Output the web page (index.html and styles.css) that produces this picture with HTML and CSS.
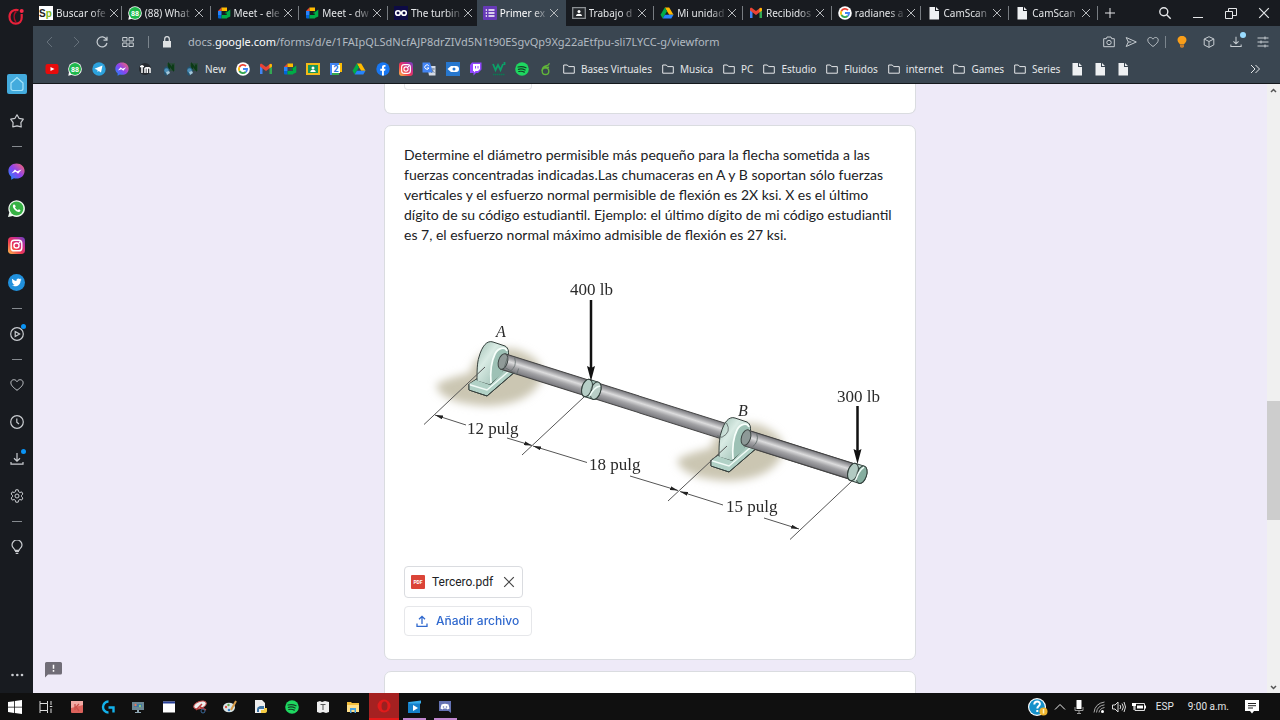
FILE: index.html
```
<!DOCTYPE html>
<html lang="es">
<head>
<meta charset="utf-8">
<title>Primer examen</title>
<link rel="stylesheet" href="styles.css">
</head>
<body>
<svg class="sprite" aria-hidden="true">
  <symbol id="x" viewBox="0 0 10 10"><path d="M1 1l8 8M9 1L1 9" fill="none" stroke="currentColor"/></symbol>
  <symbol id="folder" viewBox="0 0 12 12"><path d="M.7 2h3.6l1.4 1.6h5.6v6.6H.7z" fill="none" stroke="currentColor"/></symbol>
  <symbol id="page" viewBox="0 0 14 14"><path d="M2.500 1h5.500v4h4v8.500h-9.500zM9 1l3 3H9z" fill="#eef0f2"/></symbol>
  <symbol id="wa88" viewBox="0 0 14 14"><circle cx="7" cy="7" r="6.800" fill="#fff"/><path d="M.3 13.800l.8-4 3 3z" fill="#fff"/><circle cx="7" cy="7" r="6" fill="#1fb84c"/><text x="7" y="9.600" text-anchor="middle" class="badge-num">88</text></symbol>
  <symbol id="meet" viewBox="0 0 14 14"><path d="M1 5l3.500-3.500V5z" fill="#ea4335"/><path d="M1 5h3.500v4H1z" fill="#2684fc"/><path d="M1 9h3.500v3.500H2A1 1 0 0 1 1 11.500z" fill="#0066da"/><path d="M4.500 1.500H10V5H4.500z" fill="#ffba00"/><path d="M4.500 9H10v3.500H4.500z" fill="#00ac47"/><path d="M10 2v10l3.300-1.600V3.600L10 6z" fill="#00ac47"/><path d="M10 5v4L8 7z" fill="#00832d"/></symbol>
  <symbol id="drive" viewBox="0 0 14 14"><path d="M4.800 1.500h4.400l4.300 7.300H9.200z" fill="#ffba00"/><path d="M4.800 1.500L7 5.200 2.700 12.500.5 8.800z" fill="#00ac47"/><path d="M4.900 8.800h8.600l-2.200 3.700H2.700z" fill="#2684fc"/></symbol>
  <symbol id="gmail" viewBox="0 0 14 14"><path d="M1 3.500h2.500V12H1z" fill="#4285f4"/><path d="M10.500 3.500H13V12h-2.500z" fill="#34a853"/><path d="M1 3c0-1.300 1.400-1.500 2.300-.8L7 5l3.700-2.800C11.600 1.500 13 1.700 13 3v1.400L7 9 1 4.400z" fill="#ea4335"/><path d="M10.500 2.400c1-.8 2.500-.5 2.500.8v1.300l-2.500 1.800z" fill="#fbbc04"/></symbol>
  <symbol id="google" viewBox="0 0 14 14"><circle cx="7" cy="7" r="6.800" fill="#fff"/><g fill="none" stroke-width="1.800"><path d="M3.400 5A4.100 4.100 0 0 1 10 4.200" stroke="#ea4335"/><path d="M3.400 9a4.100 4.100 0 0 1 0-4" stroke="#fbbc05"/><path d="M3.400 9A4.100 4.100 0 0 0 9.700 10" stroke="#34a853"/><path d="M7 7h4.100A4.100 4.100 0 0 1 9.700 10" stroke="#4285f4"/></g></symbol>
  <symbol id="messenger" viewBox="0 0 16 16"><path d="M8 .5C3.500.5.4 3.600.4 7.600c0 2.300 1 4 2.600 5.300v2.800l2.600-1.300c.8.200 1.500.3 2.400.3 4.500 0 7.600-3 7.600-7.100S12.500.5 8 .5z" fill="url(#msg)"/><path d="M3.300 9.800L6.500 6l2.100 1.700L12.700 6 9.500 10 7.300 8.200z" fill="#fff"/></symbol>
  <symbol id="insta" viewBox="0 0 16 16"><rect width="16" height="16" rx="3.500" fill="url(#ig)"/><g fill="none" stroke="#fff" stroke-width="1.300"><rect x="3" y="3" width="10" height="10" rx="3"/><circle cx="8" cy="8" r="2.400"/></g><circle cx="10.900" cy="5.100" r=".8" fill="#fff"/></symbol>
  <symbol id="spotify" viewBox="0 0 14 14"><circle cx="7" cy="7" r="6.800" fill="#1ed760"/><path d="M3 5c2.800-.8 5.500-.5 8 .8M3.400 7.300c2.300-.6 4.600-.4 6.700.7M3.800 9.500c2-.5 3.800-.3 5.500.6" fill="none" stroke="#143f25" stroke-width="1.200" stroke-linecap="round"/></symbol>
  <symbol id="idm" viewBox="0 0 14 14"><path d="M5 1h8v8H5z" fill="#2b4a3b"/><path d="M7 7.500v-5l4 5v-5" fill="none" stroke="#0a3a15" stroke-width="1.800"/><path d="M2 6l3-2 3 4-1 4-3 2-2-2z" fill="#25536f"/><circle cx="4.500" cy="8.500" r="2.200" fill="#4d8fb8"/><path d="M4 10l3-1 1 2-3 2z" fill="#a6c9dc"/></symbol>
  <symbol id="heart" viewBox="0 0 14 14"><path d="M7 12.300C3 9.300.9 7.200.9 4.700c0-3.300 4.400-4.200 6.100-1 1.700-3.200 6.100-2.300 6.100 1 0 2.500-2.100 4.600-6.100 7.600z" fill="none" stroke="currentColor"/></symbol>
  <symbol id="down" viewBox="0 0 14 14"><path d="M7 1v8M4 6.300L7 9.200l3-2.900M1 10v2.200h12V10" fill="none" stroke="currentColor" stroke-width="1.200"/></symbol>
  <defs>
    <linearGradient id="msg" x1="0" y1="1" x2="1" y2="0"><stop offset="0" stop-color="#128bff"/><stop offset=".5" stop-color="#8d42ee"/><stop offset="1" stop-color="#ff6a66"/></linearGradient>
    <linearGradient id="ig" x1="0" y1="1" x2="1" y2="0"><stop offset="0" stop-color="#fdc04b"/><stop offset=".4" stop-color="#ef3a50"/><stop offset=".7" stop-color="#c42c92"/><stop offset="1" stop-color="#6048c8"/></linearGradient>
  </defs>
</svg>

<div class="screen">
  <nav class="sidebar" aria-label="Barra lateral">
    <button class="logo" aria-label="Menú de Opera"><svg viewBox="0 0 17 17"><path d="M10.500 2.200C5.500.8 1.500 4 1.500 8.800c0 4.200 2.700 6.900 6.200 6.900 3.800 0 6-2.600 6-6.200V6" fill="none" stroke="#e8213a" stroke-width="2.200"/><path d="M8.500 3.500C5.500 5 5.300 11 8 14" fill="none" stroke="#a60c25" stroke-width="1.400"/><circle cx="13.700" cy="3" r="2" fill="#fa2a49"/></svg></button>
    <button class="slot" aria-label="Inicio"><svg class="s20" viewBox="0 0 20 20"><rect width="20" height="20" rx="2" fill="#43abdd"/><path d="M4 9l6-5.500L16 9v5.500a2 2 0 0 1-2 2H6a2 2 0 0 1-2-2z" fill="none" stroke="#a5e3fa" stroke-width="1.200"/></svg></button>
    <button class="slot" aria-label="Marcadores"><svg class="s14" viewBox="0 0 14 14"><path d="M7 .8l2 3.500 4.300.9-2.400 3.400.3 4.300L7 11.800l-4.200 1.100.3-4.300L.7 5.200 5 4.300z" fill="none" stroke="currentColor" stroke-linejoin="round" stroke-width="1.200"/></svg></button>
    <hr>
    <button class="slot" aria-label="Messenger"><svg class="s17"><use href="#messenger"/></svg></button>
    <button class="slot" aria-label="WhatsApp"><svg class="s17" viewBox="0 0 16 16"><path d="M0 16l1.200-4.300A7.800 7.800 0 1 1 4.500 15z" fill="#eef8ef"/><circle cx="8" cy="8" r="6.500" fill="#36b144"/><path d="M5.300 4.300c-1.500 1.200-.4 3.400 1.200 5 1.700 1.600 3.900 2.700 5.200 1.100.5-.8-.8-1.500-1.500-1.800l-.9 1C8 9 7 8 6.500 6.900l.8-.9c-.3-.9-.9-2.300-2-1.700z" fill="#fff"/></svg></button>
    <button class="slot" aria-label="Instagram"><svg class="s17"><use href="#insta"/></svg></button>
    <button class="slot" aria-label="Twitter"><svg class="s17" viewBox="0 0 16 16"><circle cx="8" cy="8" r="8" fill="#2090dc"/><path d="M12.800 5.400l-1 .9c.1 3.800-3.900 6.700-8.300 4.600 1.100 0 2-.2 2.700-.8-1-.1-1.500-.7-1.800-1.300h.8c-1-.4-1.500-1.100-1.500-2l.8.200C3.700 6.300 3.500 5.300 4 4.500c1 1.200 2.300 1.900 4 2C7.500 4.400 9.800 3.400 11.100 4.700l1.300-.4-.7.900z" fill="#fff"/></svg></button>
    <hr>
    <button class="slot dot" aria-label="Reproductor"><svg class="s14" viewBox="0 0 14 14"><g fill="none" stroke="currentColor" stroke-width="1.200"><circle cx="7" cy="7" r="6.300"/><path d="M5.200 4.500L9.600 7 5.200 9.500z"/></g></svg></button>
    <hr>
    <button class="slot" aria-label="Favoritos"><svg class="s14"><use href="#heart"/></svg></button>
    <button class="slot" aria-label="Historial"><svg class="s14" viewBox="0 0 14 14"><g fill="none" stroke="currentColor" stroke-width="1.200"><circle cx="7" cy="7" r="6.300"/><path d="M6.800 3.500v3.700L9 9"/></g></svg></button>
    <button class="slot dot" aria-label="Descargas"><svg class="s14"><use href="#down"/></svg></button>
    <button class="slot" aria-label="Configuración"><svg class="s14" viewBox="0 0 14 14"><g fill="none" stroke="currentColor"><path d="M5.800.8h2.400l.4 1.900 1.300.8 1.800-.6 1.200 2.100L11.500 6.300v1.400l1.400 1.300-1.200 2.100-1.800-.6-1.300.8-.4 1.900H5.800l-.4-1.900-1.300-.8-1.800.6L1.100 9l1.400-1.300V6.300L1.100 5l1.200-2.100 1.800.6 1.300-.8z"/><circle cx="7" cy="7" r="2"/></g></svg></button>
    <hr>
    <button class="slot" aria-label="Consejos"><svg class="s14" viewBox="0 0 14 14"><path d="M5 10.300C4.800 8.800 2 8 2 5a5 5 0 0 1 10 0c0 3-2.800 3.800-3 5.300z" fill="none" stroke="currentColor" stroke-width="1.200"/><path d="M5 11.500h4M5.700 13.300h2.600" stroke="currentColor" stroke-width="1.200"/></svg></button>
    <button class="slot more" aria-label="Más"><svg class="s14" viewBox="0 0 14 14"><g fill="currentColor"><circle cx="2.500" cy="7" r="1.300"/><circle cx="7.300" cy="7" r="1.300"/><circle cx="12" cy="7" r="1.300"/></g></svg></button>
  </nav>

  <div class="window">
    <header class="tabbar">
      <div class="tabs">
        <div class="tab"><svg class="s14" viewBox="0 0 14 14"><path d="M0 0h14v14H0z" fill="#fff"/><text x="0" y="11" class="sp">S<tspan fill="#83b817">p</tspan></text></svg><span>Buscar ofe</span><button aria-label="Cerrar"><svg><use href="#x"/></svg></button></div>
        <div class="tab"><svg class="s14"><use href="#wa88"/></svg><span>(88) What</span><button aria-label="Cerrar"><svg><use href="#x"/></svg></button></div>
        <div class="tab"><svg class="s14"><use href="#meet"/></svg><span>Meet - ele</span><button aria-label="Cerrar"><svg><use href="#x"/></svg></button></div>
        <div class="tab"><svg class="s14"><use href="#meet"/></svg><span>Meet - dw</span><button aria-label="Cerrar"><svg><use href="#x"/></svg></button></div>
        <div class="tab last"><svg class="s14" viewBox="0 0 14 14"><path d="M0 0h14v14H0z" fill="#0d0b45"/><g fill="none" stroke="#fff" stroke-width="1.600"><circle cx="4" cy="7" r="2.300"/><circle cx="10" cy="7" r="2.300"/></g></svg><span>The turbin</span><button aria-label="Cerrar"><svg><use href="#x"/></svg></button></div>
        <div class="tab active"><svg class="s14" viewBox="0 0 14 14"><rect width="14" height="14" rx="1" fill="#673ab7"/><path d="M5.500 4h6M5.500 7h6M5.500 10h6M2.700 4H4M2.700 7H4M2.700 10H4" stroke="#fff" stroke-width="1.300"/></svg><span>Primer ex</span><button aria-label="Cerrar"><svg><use href="#x"/></svg></button></div>
        <div class="tab"><svg class="s14" viewBox="0 0 14 14"><path d="M.7 1.700h12.600v10.600H.7z" fill="#25282c" stroke="#8c9094" stroke-width="1.300"/><circle cx="7" cy="5.500" r="1.500" fill="#fff"/><path d="M4 10c0-3 6-3 6 0z" fill="#fff"/></svg><span>Trabajo d</span><button aria-label="Cerrar"><svg><use href="#x"/></svg></button></div>
        <div class="tab"><svg class="s14"><use href="#drive"/></svg><span>Mi unidad</span><button aria-label="Cerrar"><svg><use href="#x"/></svg></button></div>
        <div class="tab"><svg class="s14"><use href="#gmail"/></svg><span>Recibidos</span><button aria-label="Cerrar"><svg><use href="#x"/></svg></button></div>
        <div class="tab"><svg class="s14"><use href="#google"/></svg><span>radianes a</span><button aria-label="Cerrar"><svg><use href="#x"/></svg></button></div>
        <div class="tab"><svg class="s14"><use href="#page"/></svg><span>CamScan</span><button aria-label="Cerrar"><svg><use href="#x"/></svg></button></div>
        <div class="tab"><svg class="s14"><use href="#page"/></svg><span>CamScan</span><button aria-label="Cerrar"><svg><use href="#x"/></svg></button></div>
      </div>
      <div class="controls">
        <button class="newtab" aria-label="Pestaña nueva"><svg class="s12" viewBox="0 0 12 12"><path d="M6 1v10M1 6h10" stroke="currentColor"/></svg></button>
        <button aria-label="Buscar"><svg class="s14" viewBox="0 0 14 14"><g fill="none" stroke="currentColor" stroke-width="1.400"><circle cx="5.800" cy="5.800" r="4"/><path d="M8.700 8.700l4 4"/></g></svg></button>
        <button aria-label="Minimizar"><svg class="s12" viewBox="0 0 12 12"><path d="M1 10.500h10" stroke="currentColor"/></svg></button>
        <button aria-label="Restaurar"><svg class="s12" viewBox="0 0 12 12"><path d="M.5 4.500h7v7h-7zM3.500 4V1.500h8v7H8" fill="none" stroke="currentColor"/></svg></button>
        <button aria-label="Cerrar ventana"><svg class="s12"><use href="#x"/></svg></button>
      </div>
    </header>

    <div class="address">
      <button class="dim" aria-label="Atrás"><svg class="s12" viewBox="0 0 12 12"><path d="M8 1L3 6l5 5" fill="none" stroke="currentColor"/></svg></button>
      <button class="dim" aria-label="Adelante"><svg class="s12" viewBox="0 0 12 12"><path d="M4 1l5 5-5 5" fill="none" stroke="currentColor"/></svg></button>
      <button aria-label="Recargar"><svg class="s12" viewBox="0 0 12 12"><path d="M10.500 3.500A5 5 0 1 0 11 7M11 .7v3.500H7.500" fill="none" stroke="currentColor" stroke-width="1.200"/></svg></button>
      <button aria-label="Acceso rápido"><svg class="s12" viewBox="0 0 12 12"><path d="M.7 1.500H5v3.500H.7zM7 1.500h4.300v3.500H7zM.7 7H5v3.500H.7zM7 7h4.300v3.500H7z" fill="none" stroke="currentColor"/></svg></button>
      <i class="bar"></i>
      <svg class="s12 lock" viewBox="0 0 12 12"><path d="M2 5h8v6.500H2z" fill="currentColor"/><path d="M3.700 5.500V3a2.300 2.300 0 0 1 4.600 0v2.500" fill="none" stroke="currentColor" stroke-width="1.200"/></svg>
      <div class="url">docs.<b>google.com</b>/forms/d/e/1FAIpQLSdNcfAJP8drZIVd5N1t90ESgvQp9Xg22aEtfpu-sli7LYCC-g/viewform</div>
      <div class="tools">
        <button aria-label="Captura"><svg class="s12" viewBox="0 0 12 12"><g fill="none" stroke="currentColor"><path d="M.7 2.700h2.600L4 1h4l.7 1.700h2.600v8H.7z"/><circle cx="6" cy="6.500" r="2.200"/></g></svg></button>
        <button aria-label="Enviar"><svg class="s12" viewBox="0 0 12 12"><path d="M1.200 1.500L11.300 6 1.200 10.500 3.300 6zM3.300 6h3" fill="none" stroke="currentColor"/></svg></button>
        <button aria-label="Favorito"><svg class="s12"><use href="#heart"/></svg></button>
      </div>
      <i class="bar"></i>
      <div class="extras">
        <button aria-label="Ideas"><svg class="s12" viewBox="0 0 12 12"><path d="M4 8.500C3.800 7.300 1.500 6.500 1.500 4a4.500 4.200 0 0 1 9 0c0 2.500-2.300 3.300-2.500 4.500z" fill="#f99e19"/><path d="M4 9h4v2L6 12l-2-1z" fill="#c77c2b"/></svg></button>
        <button aria-label="Extensiones"><svg class="s12" viewBox="0 0 12 12"><path d="M6 .7l4.800 2.200v6L6 11.400 1.200 9V3zM1.200 3L6 5.500 10.800 3M6 5.500v5.800" fill="none" stroke="currentColor"/></svg></button>
        <button class="dot pale" aria-label="Descargas"><svg class="s12"><use href="#down"/></svg></button>
        <button aria-label="Configuración rápida"><svg class="s12" viewBox="0 0 12 12"><path d="M.5 2h11M.5 6h11M.5 10h11M8 .5v3M4 4.500v3M8 8.500v3" stroke="currentColor"/></svg></button>
      </div>
    </div>

    <nav class="bookmarks" aria-label="Marcadores">
      <div class="strip first">
        <svg class="s14" viewBox="0 0 14 14"><rect x=".5" y="2" width="13" height="10" rx="2" fill="#e80b0b"/><path d="M5.500 5l4 2-4 2z" fill="#fff"/></svg>
        <svg class="s14"><use href="#wa88"/></svg>
        <svg class="s14" viewBox="0 0 14 14"><circle cx="7" cy="7" r="6.700" fill="#2ca2dd"/><path d="M2.500 6.800l8-3.200-1.500 7-2.300-1.700-1.200 1.200V8z" fill="#fff"/></svg>
        <svg class="s14"><use href="#messenger"/></svg>
        <svg class="s14" viewBox="0 0 14 14"><circle cx="7" cy="7" r="6" fill="#262a30"/><path d="M2 4.500h4M4 3v8M7 11V6.500q1.300-1.500 2.300 0V11M9.300 6.500q1.500-1.500 2.700 0V11" fill="none" stroke="#fff" stroke-width="1.500"/></svg>
        <svg class="s14"><use href="#idm"/></svg>
        <svg class="s14"><use href="#idm"/></svg>
      </div>
      <a href="#new">New</a>
      <div class="strip second">
        <svg class="s14"><use href="#google"/></svg>
        <svg class="s14"><use href="#gmail"/></svg>
        <svg class="s14"><use href="#meet"/></svg>
        <svg class="s14" viewBox="0 0 14 14"><path d="M0 1h14v12H0z" fill="#f2ba18"/><path d="M2 3h10v8H2z" fill="#17965a"/><circle cx="7" cy="6" r="1.500" fill="#fff"/><path d="M4.300 10c0-3 5.400-3 5.400 0z" fill="#fff"/></svg>
        <svg class="s14" viewBox="0 0 14 14"><path d="M1 1h9v12H1z" fill="#4285f4"/><path d="M10 1h3v9h-3z" fill="#fbbc04"/><path d="M3 3h8v8H3z" fill="#fff"/><path d="M3 11h7v2H3z" fill="#34a853"/><text x="7" y="10" text-anchor="middle" class="cal">2</text></svg>
        <svg class="s14"><use href="#drive"/></svg>
        <svg class="s14" viewBox="0 0 14 14"><circle cx="7" cy="7" r="6.700" fill="#1877f2"/><path d="M6 13.600V8.700H4.300V6.800H6V5.300c0-1.900 1-2.600 3.500-2.300v1.700c-1.200-.1-1.600.1-1.600 2.100h1.600l-.4 1.900H7.900v4.900z" fill="#fff"/></svg>
        <svg class="s14"><use href="#insta"/></svg>
        <svg class="s14" viewBox="0 0 14 14"><path d="M5 4h8.500v9.500H7z" fill="#d5dbe4"/><path d="M.5.5h7.500l3 10H.5z" fill="#4385f4"/><path d="M6.800 3.800A2.200 2.200 0 1 0 7 6H5" fill="none" stroke="#fff"/><path d="M9 7h4M11 6v1q0 3-2 4M10 8l2.500 3" stroke="#6b7e97" fill="none" stroke-width=".8"/></svg>
        <svg class="s14" viewBox="0 0 14 14"><path d="M0 0h14v14H0z" fill="#2677ce"/><path d="M1.500 7L5 4h5a3 3 0 0 1 0 6H5z" fill="#fff"/><circle cx="8" cy="7" r="1.500" fill="#2677ce"/></svg>
        <svg class="s14" viewBox="0 0 14 14"><path d="M1 3l2-2.500h9.500v7L9 11H7l-2.500 2.500V11H1z" fill="#9147ff"/><path d="M4 2h7v5L9 9H6.500L5 10.500V9H4z" fill="#fff"/><path d="M6.500 4v2.500M9 4v2.500" stroke="#9147ff"/></svg>
        <svg class="s14" viewBox="0 0 14 14"><path d="M1 2l2.500 6L6 3l2.500 5L11 2M12.500 0v3" fill="none" stroke="#0ca068" stroke-width="1.800"/><path d="M1 12.500h12" stroke="#0b7953" stroke-width="1.500" stroke-dasharray="1.500 .5"/></svg>
        <svg class="s14"><use href="#spotify"/></svg>
        <svg class="s14" viewBox="0 0 14 14"><g fill="none" stroke="#61b53a" stroke-width="1.400"><circle cx="6.500" cy="9.200" r="3.300"/><path d="M3.200 9C3 5.500 4.500 4.500 7.500 3.800 9.500 3.300 10 2.300 10.500 1.200M5.500 5.800L10 5.200"/></g></svg>
      </div>
      <a href="#f1"><svg class="s12"><use href="#folder"/></svg>Bases Virtuales</a>
      <a href="#f2"><svg class="s12"><use href="#folder"/></svg>Musica</a>
      <a href="#f3"><svg class="s12"><use href="#folder"/></svg>PC</a>
      <a href="#f4"><svg class="s12"><use href="#folder"/></svg>Estudio</a>
      <a href="#f5"><svg class="s12"><use href="#folder"/></svg>Fluidos</a>
      <a href="#f6"><svg class="s12"><use href="#folder"/></svg>internet</a>
      <a href="#f7"><svg class="s12"><use href="#folder"/></svg>Games</a>
      <a href="#f8"><svg class="s12"><use href="#folder"/></svg>Series</a>
      <div class="strip pages">
        <svg class="s14"><use href="#page"/></svg>
        <svg class="s14"><use href="#page"/></svg>
        <svg class="s14"><use href="#page"/></svg>
      </div>
      <button class="overflow" aria-label="Más marcadores"><svg class="s12" viewBox="0 0 12 12"><path d="M2 2l4 4-4 4M6.500 2l4 4-4 4" fill="none" stroke="currentColor"/></svg></button>
    </nav>

    <div class="viewport">
      <main class="form">
        <section class="card prev"><div class="stub"></div></section>
        <section class="card question">
          <p>Determine el diámetro permisible más pequeño para la flecha sometida a las<br>fuerzas concentradas indicadas.Las chumaceras en A y B soportan sólo fuerzas<br>verticales y el esfuerzo normal permisible de flexión es 2X ksi. X es el último<br>dígito de su código estudiantil. Ejemplo: el último dígito de mi código estudiantil<br>es 7, el esfuerzo normal máximo admisible de flexión es 27 ksi.</p>
          <svg class="figure" viewBox="405 265 492 282" role="img" aria-label="Flecha apoyada en A y B con cargas de 400 lb y 300 lb">
            <defs>
              <linearGradient id="steel" x1="0" y1="0" x2="0" y2="1"><stop offset="0" stop-color="#75757a"/><stop offset=".2" stop-color="#a5a5a8"/><stop offset=".4" stop-color="#dcdcdd"/><stop offset=".65" stop-color="#a3a3a6"/><stop offset="1" stop-color="#76767b"/></linearGradient>
              <linearGradient id="mint" x1="0" y1="0" x2="1" y2="1"><stop offset="0" stop-color="#9dbdb1"/><stop offset=".35" stop-color="#d9ebe4"/><stop offset="1" stop-color="#86aea1"/></linearGradient>
              <filter id="soft" x="-20%" y="-30%" width="140%" height="160%"><feGaussianBlur stdDeviation="4"/></filter>
              <marker id="tip" viewBox="0 0 8 4" refX="8" refY="2" markerWidth="8" markerHeight="4" markerUnits="userSpaceOnUse" orient="auto-start-reverse"><path d="M0 0l8 2-8 2z" fill="#222"/></marker>
              <g id="bearing">
                <path d="M476 380l34-24 7 8v7l-29 25-18-6v-6z" fill="#a9c9be" stroke="#353f3c"/>
                <path d="M478 381c0-9 0-18 2-24 3-11 8-17 14-15l12 4c4 2 4 7 3 13l-6 13-12 13z" fill="url(#mint)" stroke="#353f3c"/>
                <path d="M492 383c-1-13 1-23 4-29 3-6 10-8 12-3 1 4 0 9-2 13l-3 10z" fill="#9dc1b5"/>
                <path d="M492 383c-1-13 1-23 4-29 3-6 10-8 12-3" fill="none" stroke="#f7fffb" stroke-width="1.700"/>
                <path d="M470 384l7-4 14 5 25-20v5l-28 25-18-5z" fill="#b1d1c6"/>
                <path d="M470 384.500l18 5.500 29-25" fill="none" stroke="#f1fbf7" stroke-width="1.500"/>
                <path d="M470 384v6l18 6 29-25v-6" fill="none" stroke="#353f3c"/>
              </g>
            </defs>
            <g fill="#cbc6b2" filter="url(#soft)">
              <path id="ground" d="M437 385q8-6 34-12 6-28 46-24 34 12 24 34-14 22-54 23-46-3-50-21z"/>
              <use href="#ground" transform="translate(241 75)"/>
            </g>
            <use href="#bearing"/>
            <g transform="translate(504 361.500) rotate(17.500)"><rect x="0" y="-8" width="368" height="16" fill="url(#steel)" stroke="#444"/><ellipse cx="0" cy="0" rx="4.500" ry="8" fill="#909a98" stroke="#3d4543"/><path d="M10-7q5 7 0 14M3-6v11l14 3V2" fill="none" stroke="#606b69" stroke-width=".7"/></g>
            <use href="#bearing" transform="translate(242 76)"/>
            <g transform="translate(747 437.500) rotate(17.500)"><rect x="0" y="-7.500" width="112" height="16" fill="url(#steel)"/><path d="M0-7.500h112M0 8.500h112" stroke="#444"/><ellipse cx="0" cy="0" rx="4.500" ry="8" fill="#8d9997" stroke="#3d4543"/><path d="M9-7q5 7 0 14M-23-8q8 7 0 15h-5" fill="none" stroke="#606b69" stroke-width=".8"/></g>
            <g transform="translate(588 388) rotate(17.500)" stroke="#33403c"><path d="M0-9h9a5 9 0 0 1 0 18H0a5 9 0 0 1 0-18z" fill="#a5c4ba"/><ellipse cx="9" cy="0" rx="5" ry="9" fill="#b9cec7"/><ellipse cx="0" cy="0" rx="5" ry="9" fill="#c2d5cf" fill-opacity=".6"/><path d="M5 7q1-10 7-13" fill="none" stroke="#f2fffa" stroke-width="1.500"/></g>
            <g transform="translate(854 472) rotate(17.500)" stroke="#33403c"><path d="M0-9h9a5 9 0 0 1 0 18H0a5 9 0 0 1 0-18z" fill="#bfd9d0"/><ellipse cx="9" cy="0" rx="5" ry="9" fill="#85ad9f"/><ellipse cx="0" cy="0" rx="5" ry="9" fill="#aabfb9" fill-opacity=".6"/><path d="M5 7q0-10 4-15" fill="none" stroke="#f2fffa" stroke-width="1.500"/></g>
            <g stroke="#555" fill="none">
              <path d="M486 367l-61 57.500M585 397l-62 58M728 446l-59 55M853 481l-62 58.500"/>
              <path d="M436 415l31 10" marker-start="url(#tip)"/>
              <path d="M534 446l54 16.500" marker-start="url(#tip)"/>
              <path d="M681 491.500l43 13.500" marker-start="url(#tip)"/>
              <path d="M508 438l25 7.500" marker-end="url(#tip)"/>
              <path d="M631 476l48 14.500" marker-end="url(#tip)"/>
              <path d="M765 518l35 11" marker-end="url(#tip)"/>
            </g>
            <path d="M592 300v72M858.500 406v50" stroke="#111" stroke-width="2.500"/>
            <path d="M588 366l4 2 4-2-4 15zM854.500 449l4 2 4-2-4 15z" fill="#111"/>
            <g class="labels">
              <text x="571" y="295">400 lb</text><text x="838" y="402">300 lb</text>
              <text x="468" y="434">12 pulg</text><text x="590" y="470">18 pulg</text><text x="727" y="512">15 pulg</text>
              <text x="497" y="337" class="it">A</text><text x="739" y="416" class="it">B</text>
            </g>
          </svg>
          <div class="file"><svg class="s14" viewBox="0 0 14 14"><rect width="14" height="14" rx="1" fill="#db4437"/><text x="7" y="9" text-anchor="middle" class="pdf">PDF</text></svg><span>Tercero.pdf</span><button aria-label="Quitar archivo"><svg class="s12"><use href="#x"/></svg></button></div>
          <button class="add"><svg class="s12" viewBox="0 0 12 12"><path d="M6 9V1.500M3 4.300l3-3 3 3M1 8.500v2.800h10V8.500" fill="none" stroke="currentColor" stroke-width="1.300"/></svg>Añadir archivo</button>
        </section>
        <section class="card next"></section>
      </main>
      <div class="scroll"><svg viewBox="0 0 12 12"><path d="M3.500 8L6 5.500 8.500 8" fill="none" stroke="#555" stroke-width="1.500"/></svg><i class="thumb"></i><svg viewBox="0 0 12 12"><path d="M3.500 5L6 7.500 8.500 5" fill="none" stroke="#555" stroke-width="1.500"/></svg></div>
      <button class="report" aria-label="Informar de un problema"><svg viewBox="0 0 17 17"><path d="M1.500 1h14a1.500 1.500 0 0 1 1.500 1.500V12a1.500 1.500 0 0 1-1.500 1.500H3L0 16.500v-14A1.500 1.500 0 0 1 1.500 1z" fill="#706d77"/><path d="M8.500 3.700v4M8.500 9v1.700" stroke="#fff" stroke-width="1.500"/></svg></button>
    </div>
  </div>
</div>

<footer class="taskbar">
  <div class="apps">
    <button aria-label="Inicio"><svg class="s14" viewBox="0 0 14 14"><path d="M0 2l6-.8v5.500H0zM6.800 1.100L14 0v6.700H6.800zM0 7.400h6v5.500L0 12.100zM6.800 7.400H14V14l-7.200-1z" fill="#fff"/></svg></button>
    <button aria-label="Vista de tareas"><svg class="s14" viewBox="0 0 14 14"><path d="M1 1v2.500h7.500V1M1 13v-2.500h7.500V13M1 3.500v7M8.500 3.500v7M12 1v4M12 8.500V13M10.800 6.500h2.500" fill="none" stroke="#ddd"/></svg></button>
    <button aria-label="Juego"><svg class="s14" viewBox="0 0 14 14"><rect x="1" y="1" width="12" height="12" rx="1" fill="#dc625b"/><path d="M1 1h12v4L1 8z" fill="#f2aaa4"/><path d="M5 4v6M9 4L6 7l3 4" stroke="#c9504b" stroke-width="1.300" fill="none"/></svg></button>
    <button aria-label="Logitech G HUB"><svg class="s14" viewBox="0 0 14 14"><path d="M7.500 1.500a5.500 5.500 0 1 0 0 11M7.500 7.500h5v5" fill="none" stroke="#13b2eb" stroke-width="2.400"/></svg></button>
    <button aria-label="Monitor"><svg class="s14" viewBox="0 0 14 14"><path d="M1 2h12v8H1z" fill="#6c8794"/><path d="M3 4h8v3H3z" fill="#3e79a5"/><circle cx="4.500" cy="5" r="1.200" fill="#eb7756"/><circle cx="9" cy="6" r="1.200" fill="#8cc97c"/><path d="M6 10h2v2h2v1H4v-1h2z" fill="#8fa6b2"/></svg></button>
    <button aria-label="Ventana"><svg class="s14" viewBox="0 0 14 14"><path d="M1 1.500h12v11H1z" fill="#fff"/><path d="M1 1.500h12v2H1z" fill="#263f98"/></svg></button>
    <button aria-label="Recortes"><svg class="s14" viewBox="0 0 14 14"><ellipse cx="7" cy="5" rx="6.500" ry="3.500" fill="#eee" stroke="#c84e4e" transform="rotate(-20 7 5)"/><path d="M3 10l6-6M7 7l6 3" stroke="#b83c3c" stroke-width="1.500"/><circle cx="10" cy="11" r="2" fill="none" stroke="#376798"/></svg></button>
    <button aria-label="Paint"><svg class="s14" viewBox="0 0 14 14"><ellipse cx="6" cy="7.500" rx="6" ry="4.800" fill="#d9e6e8"/><circle cx="3" cy="7" r="1.200" fill="#de5548"/><circle cx="5.500" cy="5" r="1.200" fill="#60a64a"/><circle cx="6" cy="10" r="1.300" fill="#397fc4"/><path d="M8 10l5-9" stroke="#d89b48" stroke-width="2"/></svg></button>
    <button aria-label="Python"><svg class="s14" viewBox="0 0 14 14"><path d="M1 0h7l3 3v10H1z" fill="#eee"/><path d="M6 6h4v3H5v3H3V9q0-2 3-3z" fill="#3d75a5"/><path d="M10 8h3v3q0 2-3 2H7v-3h3z" fill="#f5cc43"/></svg></button>
    <button aria-label="Spotify"><svg class="s14"><use href="#spotify"/></svg></button>
    <button aria-label="Typora"><svg class="s14" viewBox="0 0 14 14"><path d="M1 2l3-1 2 1 3-1 4 1v10l-3 1-3-1-3 1-3-1z" fill="#eee"/><path d="M4.500 4.500h5M7 4.500v5.500" stroke="#555" fill="none"/></svg></button>
    <button aria-label="Explorador"><svg class="s14" viewBox="0 0 14 14"><path d="M1 2h4l1 1h7v9H1z" fill="#f0bc3c"/><path d="M1 5h12v7H1z" fill="#ffe08a"/><path d="M4 8h6v5H8.500v-3h-3v3H4z" fill="#47a1df"/></svg></button>
    <button class="opera" aria-label="Opera GX"><svg class="s14" viewBox="0 0 14 14"><circle cx="7" cy="7" r="6.500" fill="#e21b1b"/><ellipse cx="7.500" cy="7" rx="3" ry="4.500" fill="#9b2020"/></svg></button>
    <button class="open" aria-label="Video"><svg class="s14" viewBox="0 0 14 14"><path d="M0 2h12v11H0z" fill="#1580ca"/><path d="M1 2l12-1.500v3H1z" fill="#36acea"/><path d="M5 5l5 3-5 3z" fill="#fff"/></svg></button>
    <button class="open" aria-label="Discord"><svg class="s14" viewBox="0 0 14 14"><path d="M1 1h12v12l-2.500-2H1z" fill="#6573b4"/><path d="M3.500 4.500q3.500-1.500 7 0l1 4-2 1-1-1h-3l-1 1-2-1z" fill="#fff"/><circle cx="5.500" cy="7" r=".8" fill="#6573b4"/><circle cx="8.500" cy="7" r=".8" fill="#6573b4"/></svg></button>
  </div>
  <div class="tray">
    <button aria-label="Ayuda"><svg class="s20" viewBox="0 0 20 20"><circle cx="9" cy="10" r="9" fill="#fff"/><circle cx="9" cy="10" r="7.800" fill="#1591cb"/><path d="M6.300 7.500c0-4 6-3.700 5.600-.3C11.700 9 9.300 9 9.300 11.500M9.300 13v2" fill="none" stroke="#fff" stroke-width="2"/><circle cx="15.500" cy="14.500" r="4" fill="#efb52e"/><path d="M15.500 12v4.500" stroke="#fff2bc" stroke-width="1.500"/></svg></button>
    <button aria-label="Iconos ocultos"><svg class="s12" viewBox="0 0 12 12"><path d="M1 8.500l5-5 5 5" fill="none" stroke="#eee"/></svg></button>
    <button aria-label="Micrófono"><svg class="s14" viewBox="0 0 14 14"><rect x="4.500" y="0" width="5" height="9" rx=".5" fill="#fff"/><path d="M3 7v3.500h8V7M7 10.500V14M5 13.500h4" fill="none" stroke="#999"/></svg></button>
    <button aria-label="Red"><svg class="s14" viewBox="0 0 14 14"><path d="M2 12.500Q3 3.500 12.500 2M4.500 12.500Q5 6 12.500 4.800M7 12.500q.5-4 5.500-5" fill="none" stroke="#aaa"/><circle cx="10.500" cy="11.500" r="1.500" fill="#fff"/></svg></button>
    <button aria-label="Volumen"><svg class="s14" viewBox="0 0 14 14"><path d="M.5 5H3l3-3v10L3 9H.5zM8 5q1.500 2 0 4M10 3.500q2.800 3.500 0 7M12 2q3 5 0 10" fill="none" stroke="#ddd"/></svg></button>
    <button aria-label="Batería"><svg class="s14" viewBox="0 0 14 14"><path d="M3 3.500h9.500v7H3z" fill="none" stroke="#ddd"/><path d="M5 5.500h6v3H5zM12.500 5.500H14v3h-1.500zM0 3h4v3H2.500v4h-1V6H0z" fill="#fff"/></svg></button>
    <span class="lang">ESP</span>
    <time>9:00 a.m.</time>
    <button aria-label="Notificaciones"><svg class="s14" viewBox="0 0 14 14"><path d="M0 0h14v11H9l-2 2.500L5 11H0z" fill="#fff"/><path d="M3 3.500h8M3 5.700h8M3 8h5" stroke="#222"/></svg></button>
  </div>
</footer>
</body>
</html>
```

FILE: styles.css
```
* { box-sizing: border-box; }
body {
  margin: 0;
  height: 100vh;
  display: flex;
  flex-direction: column;
  overflow: hidden;
  font: 10px/14px "Noto Sans", sans-serif;
  color: #e4e6e8;
  background: #101010;
}
button {
  display: inline-flex;
  align-items: center;
  justify-content: center;
  padding: 0;
  border: 0;
  background: none;
  color: inherit;
  font: inherit;
}
svg { display: block; flex: none; }
.sprite { position: absolute; width: 0; height: 0; }
.s12 { width: 12px; height: 12px; }
.s14 { width: 14px; height: 14px; }
.s17 { width: 17px; height: 17px; }
.s20 { width: 20px; height: 20px; }
.badge-num { font: 700 7px Roboto, sans-serif; fill: #fff; }
.sp { font: 700 10px "Liberation Sans", sans-serif; fill: #222; }
.cal { font: 700 9px Roboto, sans-serif; fill: #2c73e0; }
.pdf { font: 700 5px Roboto, sans-serif; fill: #fff; }

.screen { flex: 1; min-height: 0; display: flex; }

.sidebar {
  width: 33px;
  display: flex;
  flex-direction: column;
  background: #181b20;
  color: #c9ccd0;
}
.logo { height: 65px; padding-bottom: 33px; }
.logo svg { width: 17px; height: 17px; }
.slot { height: 37px; }
.more { margin-top: auto; }
.sidebar hr {
  width: 10px;
  height: 1px;
  margin: 7px auto 6px;
  border: 0;
  background: #858a8f;
}
.dot { position: relative; }
.dot::after {
  content: "";
  position: absolute;
  top: 9px;
  right: 7px;
  width: 5px;
  height: 5px;
  border-radius: 50%;
  background: #0a94f5;
}
.dot.pale::after { top: -4px; right: -4px; width: 6px; height: 6px; background: #9adcff; }

.window { flex: 1; min-width: 0; display: flex; flex-direction: column; background: #3a4651; }

.tabbar { display: flex; height: 26px; background: #181b20; }
.tabs { flex: 1; min-width: 0; display: flex; }
.tab {
  flex: 1 1 0;
  min-width: 0;
  display: flex;
  align-items: center;
  gap: 3px;
  padding: 0 7px 0 6px;
  background: linear-gradient(#777c81, #777c81) right center / 1px 14px no-repeat;
}
.tab.last { background: none; }
.tab.active { background: #3a4651; color: #fff; }
.tab span {
  flex: 1;
  white-space: nowrap;
  -webkit-mask-image: linear-gradient(to right, #000 70%, rgba(0, 0, 0, .2));
  mask-image: linear-gradient(to right, #000 70%, rgba(0, 0, 0, .2));
}
.tab button { color: #b5b8bb; }
.tab button svg { width: 10px; height: 10px; }
.controls { display: flex; align-items: center; }
.controls button { width: 33px; height: 26px; }
.controls .newtab { width: 24px; margin-right: 26px; }

.address {
  display: flex;
  align-items: center;
  height: 32px;
  padding: 0 11px;
  color: #c8ced3;
}
.address > button { width: 12px; margin-right: 14px; }
.address .dim { color: #66717b; }
.bar { width: 1px; height: 12px; background: #7b858d; }
.lock { margin: 0 15px 0 12px; color: #dfe2e4; }
.url { flex: 1; min-width: 0; overflow: hidden; white-space: nowrap; font-size: 11px; line-height: 16px; color: #b2bac1; }
.url b { font-weight: 400; color: #fff; }
.tools { display: flex; gap: 10px; margin-right: 6px; }
.extras { display: flex; gap: 15px; margin-left: 10px; }

.bookmarks {
  display: flex;
  align-items: center;
  gap: 10px;
  height: 26px;
  padding: 0 19px 3px 12px;
  border-bottom: 1px solid #14181c;
}
.strip { display: flex; justify-content: space-between; }
.strip.first { width: 154px; margin-right: -4px; }
.strip.second { width: 317px; }
.strip.pages { width: 60px; }
.bookmarks a { display: flex; align-items: center; gap: 6px; white-space: nowrap; color: inherit; text-decoration: none; }
.overflow { margin-left: auto; }

.viewport {
  position: relative;
  flex: 1;
  min-height: 0;
  display: flex;
  overflow: hidden;
  background: #eeeaf8;
}
.form { flex: 1; display: flex; flex-direction: column; gap: 11px; align-items: center; }
.card {
  flex: none;
  width: 100%;
  max-width: 532px;
  border: 1px solid #dadce0;
  border-radius: 7px;
  background: #fff;
}
.prev { padding: 0 19px 23px; border-top: 0; border-radius: 0 0 7px 7px; }
.stub { width: 128px; height: 6px; border: 1px solid #e6e7ea; border-top: 0; border-radius: 0 0 4px 4px; }
.question {
  display: flex;
  flex-direction: column;
  align-items: flex-start;
  padding: 19px 19px 23px;
}
.question p { margin: 0 0 20px; font: 14px/20px Lato, sans-serif; color: #202124; white-space: nowrap; }
.figure { width: 100%; height: auto; }
.labels { font: 17px "Liberation Serif", serif; fill: #2a2a2a; }
.it { font: italic 16px "Liberation Serif", serif; }
.file {
  display: flex;
  align-items: center;
  height: 32px;
  margin: 19px 0 8px;
  padding: 0 7px 0 6px;
  border: 1px solid #dadce0;
  border-radius: 4px;
  font: 12px/16px Roboto, sans-serif;
  color: #202124;
}
.file span { margin: 0 10px 0 7px; }
.file button { color: #444; }
.add {
  height: 30px;
  gap: 8px;
  padding: 0 12px 0 11px;
  border: 1px solid #e6e7ea;
  border-radius: 4px;
  font: 500 12px/16px Inter, sans-serif;
  color: #3069ce;
}
.next { height: 60px; }
.scroll { width: 13px; display: flex; flex-direction: column; background: #f0f0f0; }
.scroll svg { width: 13px; height: 12px; }
.thumb { height: 119px; margin: 305px 0 auto; background: #cdcdcd; }
.report { position: absolute; left: 12px; bottom: 15px; }
.report svg { width: 17px; height: 17px; }

.taskbar { height: 27px; display: flex; justify-content: space-between; background: #101010; }
.apps { display: flex; width: 36%; }
.apps button { flex: 1; }
.apps .opera { background: #a52121; border-bottom: 2px solid #e51919; }
.apps .open { background: linear-gradient(#c187cf, #c187cf) center bottom / 23px 2px no-repeat; }
.tray { display: flex; align-items: center; gap: 6px; padding: 0 21px 0 0; font-family: Roboto, sans-serif; }
.lang { margin: 0 8px 0 4px; }
.tray time { margin-right: 10px; }
```
